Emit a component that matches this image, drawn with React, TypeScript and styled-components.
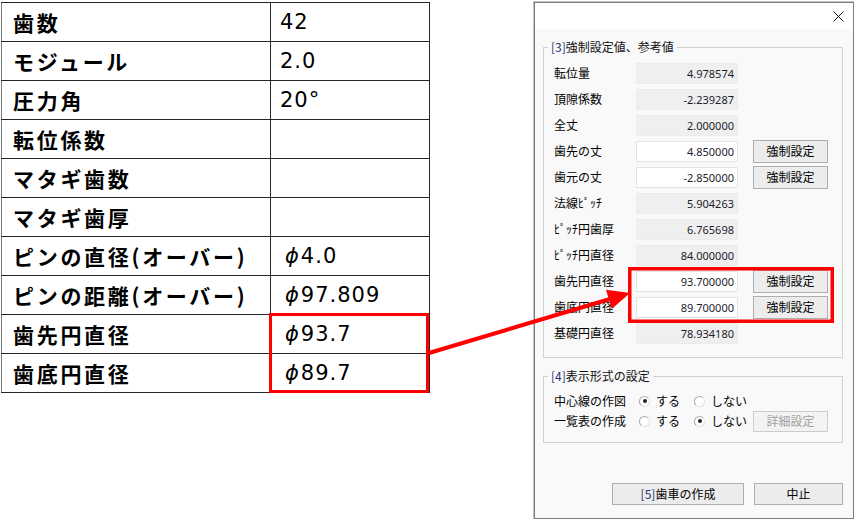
import styled, { createGlobalStyle } from "styled-components";

const GlobalStyle = createGlobalStyle`
  html, body {
    margin: 0;
    padding: 0;
    background: #ffffff;
  }
  body {
    font-family: "Noto Sans CJK JP", sans-serif;
    color: #000;
  }
`;

const Page = styled.div`
  position: relative;
  width: 854px;
  height: 519px;
  box-sizing: border-box;
  padding-top: 2px;
  display: flex;
  align-items: flex-start;
  overflow: hidden;
`;

/* ---------- left spec table ---------- */

const SpecTable = styled.table`
  margin-left: 1px;
  width: 428px;
  table-layout: fixed;
  border-collapse: collapse;
`;

const LabelCell = styled.td`
  height: 38px;
  padding: 0 0 0 11px;
  border: 1px solid #262626;
  border-left-color: #7a7a7a;
  font-family: "Noto Sans CJK JP", sans-serif;
  font-weight: 700;
  font-size: 21px;
  letter-spacing: 2.7px;
  line-height: 38px;
  white-space: nowrap;
  overflow: hidden;
`;

const ValueCell = styled.td<{ $phi?: boolean }>`
  height: 38px;
  padding: 0 0 0 ${(p) => (p.$phi ? 14 : 9)}px;
  border: 1px solid #262626;
  border-left-color: #7a7a7a;
  font-family: "DejaVu Sans", sans-serif;
  font-size: 21px;
  letter-spacing: 1px;
  line-height: 38px;
  white-space: nowrap;
`;

const Phi = styled.span`
  font-style: italic;
  margin-right: 1px;
`;

/* ---------- dialog ---------- */

const Dialog = styled.div`
  margin-left: 104px;
  width: 320px;
  height: 517px;
  box-sizing: border-box;
  border: 1px solid #7c7c7c;
  box-shadow: 0 0 0 1px #c4c4c4;
  background: #f9f9f9;
  display: flex;
  flex-direction: column;
  font-size: 12px;
`;

const TitleBar = styled.div`
  height: 26px;
  background: #ffffff;
  display: flex;
  align-items: center;
  justify-content: flex-end;
  padding-right: 9px;
`;

const DialogBody = styled.div`
  flex: 1;
  padding: 10px 10px 0 8px;
  display: flex;
  flex-direction: column;
`;

const Group = styled.fieldset<{ $top: number; $gap: number }>`
  margin: ${(p) => p.$gap}px 0 0 0;
  padding: ${(p) => p.$top}px 10px 11px 10px;
  border: 1px solid #d2d2d2;
  min-width: 0;
`;

const Legend = styled.legend`
  margin-left: -6px;
  padding: 0 3px;
  font-size: 12px;
  line-height: 16px;
  color: #111;
`;

const Tag = styled.span`
  color: #1d3274;
`;

const FieldRow = styled.div`
  display: flex;
  align-items: center;
  height: 26px;
`;

const RowLabel = styled.span<{ $w: number }>`
  width: ${(p) => p.$w}px;
  flex: none;
  font-size: 12px;
  line-height: 16px;
  white-space: nowrap;
`;

const Field = styled.div<{ $editable?: boolean }>`
  width: 102px;
  height: 21px;
  box-sizing: border-box;
  padding-right: 3px;
  border: 1px solid ${(p) => (p.$editable ? "#e4e4e4" : "#ececec")};
  background: ${(p) => (p.$editable ? "#ffffff" : "#efefef")};
  display: flex;
  align-items: center;
  justify-content: flex-end;
  font-family: "Noto Sans", sans-serif;
  font-size: 11px;
  color: #1c1c2c;
`;

const WinButton = styled.button<{ $w: number; $h: number; $gap?: number }>`
  width: ${(p) => p.$w}px;
  height: ${(p) => p.$h}px;
  margin-left: ${(p) => p.$gap ?? 0}px;
  padding: 0;
  box-sizing: border-box;
  border: 1px solid #adadad;
  background: #ececec;
  font-family: "Noto Sans CJK JP", sans-serif;
  font-size: 12px;
  line-height: 14px;
  color: #000;
  &:disabled {
    border-color: #cccccc;
    background: #f3f3f3;
    color: #a2a2a2;
  }
`;

const OptionRow = styled.div`
  display: flex;
  align-items: center;
  height: 20px;
`;

const RadioOption = styled.label<{ $w: number }>`
  width: ${(p) => p.$w}px;
  flex: none;
  display: flex;
  align-items: center;
  gap: 6px;
  font-size: 12px;
  line-height: 16px;
`;

const RadioMark = styled.span<{ $checked?: boolean }>`
  width: 11px;
  height: 11px;
  box-sizing: border-box;
  border-radius: 50%;
  border: 1px solid #a8a8a8;
  border-right-color: #e2e2e2;
  border-bottom-color: #e2e2e2;
  background: #ffffff;
  display: flex;
  align-items: center;
  justify-content: center;
  &::after {
    content: "";
    width: 4px;
    height: 4px;
    border-radius: 50%;
    background: ${(p) => (p.$checked ? "#222" : "transparent")};
  }
`;

const ButtonBar = styled.div`
  margin-top: 40px;
  display: flex;
  justify-content: flex-end;
  gap: 10px;
`;

const Overlay = styled.svg`
  position: absolute;
  left: 0;
  top: 0;
  pointer-events: none;
`;

type SpecRow = { label: string; value?: string; phi?: boolean };

const specRows: SpecRow[] = [
  { label: "歯数", value: "42" },
  { label: "モジュール", value: "2.0" },
  { label: "圧力角", value: "20°" },
  { label: "転位係数" },
  { label: "マタギ歯数" },
  { label: "マタギ歯厚" },
  { label: "ピンの直径(オーバー)", value: "4.0", phi: true },
  { label: "ピンの距離(オーバー)", value: "97.809", phi: true },
  { label: "歯先円直径", value: "93.7", phi: true },
  { label: "歯底円直径", value: "89.7", phi: true },
];

type DialogRow = { label: string; value: string; editable?: boolean };

const dialogRows: DialogRow[] = [
  { label: "転位量", value: "4.978574" },
  { label: "頂隙係数", value: "-2.239287" },
  { label: "全丈", value: "2.000000" },
  { label: "歯先の丈", value: "4.850000", editable: true },
  { label: "歯元の丈", value: "-2.850000", editable: true },
  { label: "法線ﾋﾟｯﾁ", value: "5.904263" },
  { label: "ﾋﾟｯﾁ円歯厚", value: "6.765698" },
  { label: "ﾋﾟｯﾁ円直径", value: "84.000000" },
  { label: "歯先円直径", value: "93.700000", editable: true },
  { label: "歯底円直径", value: "89.700000", editable: true },
  { label: "基礎円直径", value: "78.934180" },
];

function CloseIcon() {
  return (
    <svg width="11" height="11" viewBox="0 0 11 11">
      <path d="M0.5 0.5 L10.5 10.5 M10.5 0.5 L0.5 10.5" stroke="#111" strokeWidth="1" />
    </svg>
  );
}

function App() {
  return (
    <>
      <GlobalStyle />
      <Page>
        <SpecTable>
          <colgroup>
            <col style={{ width: 269 }} />
            <col style={{ width: 159 }} />
          </colgroup>
          <tbody>
            {specRows.map((r) => (
              <tr key={r.label}>
                <LabelCell>{r.label}</LabelCell>
                <ValueCell $phi={r.phi}>
                  {r.phi && <Phi>ϕ</Phi>}
                  {r.value}
                </ValueCell>
              </tr>
            ))}
          </tbody>
        </SpecTable>

        <Dialog>
          <TitleBar>
            <CloseIcon />
          </TitleBar>
          <DialogBody>
            <Group $top={5} $gap={0}>
              <Legend>
                <Tag>[3]</Tag>強制設定値、参考値
              </Legend>
              {dialogRows.map((r) => (
                <FieldRow key={r.label}>
                  <RowLabel $w={82}>{r.label}</RowLabel>
                  <Field $editable={r.editable}>{r.value}</Field>
                  {r.editable && (
                    <WinButton $w={75} $h={23} $gap={15}>
                      強制設定
                    </WinButton>
                  )}
                </FieldRow>
              ))}
            </Group>

            <Group $top={7} $gap={10}>
              <Legend>
                <Tag>[4]</Tag>表示形式の設定
              </Legend>
              <OptionRow>
                <RowLabel $w={85}>中心線の作図</RowLabel>
                <RadioOption $w={55}>
                  <RadioMark $checked />
                  する
                </RadioOption>
                <RadioOption $w={59}>
                  <RadioMark />
                  しない
                </RadioOption>
              </OptionRow>
              <OptionRow>
                <RowLabel $w={85}>一覧表の作成</RowLabel>
                <RadioOption $w={55}>
                  <RadioMark />
                  する
                </RadioOption>
                <RadioOption $w={59}>
                  <RadioMark $checked />
                  しない
                </RadioOption>
                <WinButton $w={75} $h={21} disabled>
                  詳細設定
                </WinButton>
              </OptionRow>
            </Group>

            <ButtonBar>
              <WinButton $w={132} $h={22}>
                <Tag>[5]</Tag>歯車の作成
              </WinButton>
              <WinButton $w={89} $h={22}>
                中止
              </WinButton>
            </ButtonBar>
          </DialogBody>
        </Dialog>

        <Overlay width="854" height="519" viewBox="0 0 854 519">
          <rect x="270.5" y="314.5" width="157" height="77" fill="none" stroke="#ff0000" strokeWidth="3" />
          <rect x="629.75" y="268.75" width="202.5" height="52.5" fill="none" stroke="#ff0000" strokeWidth="3.5" />
          <line x1="429" y1="353" x2="610" y2="299" stroke="#ff0000" strokeWidth="4" />
          <polygon points="630,293 611.7,308.9 606,289.7" fill="#ff0000" />
        </Overlay>
      </Page>
    </>
  );
}

export default App;
